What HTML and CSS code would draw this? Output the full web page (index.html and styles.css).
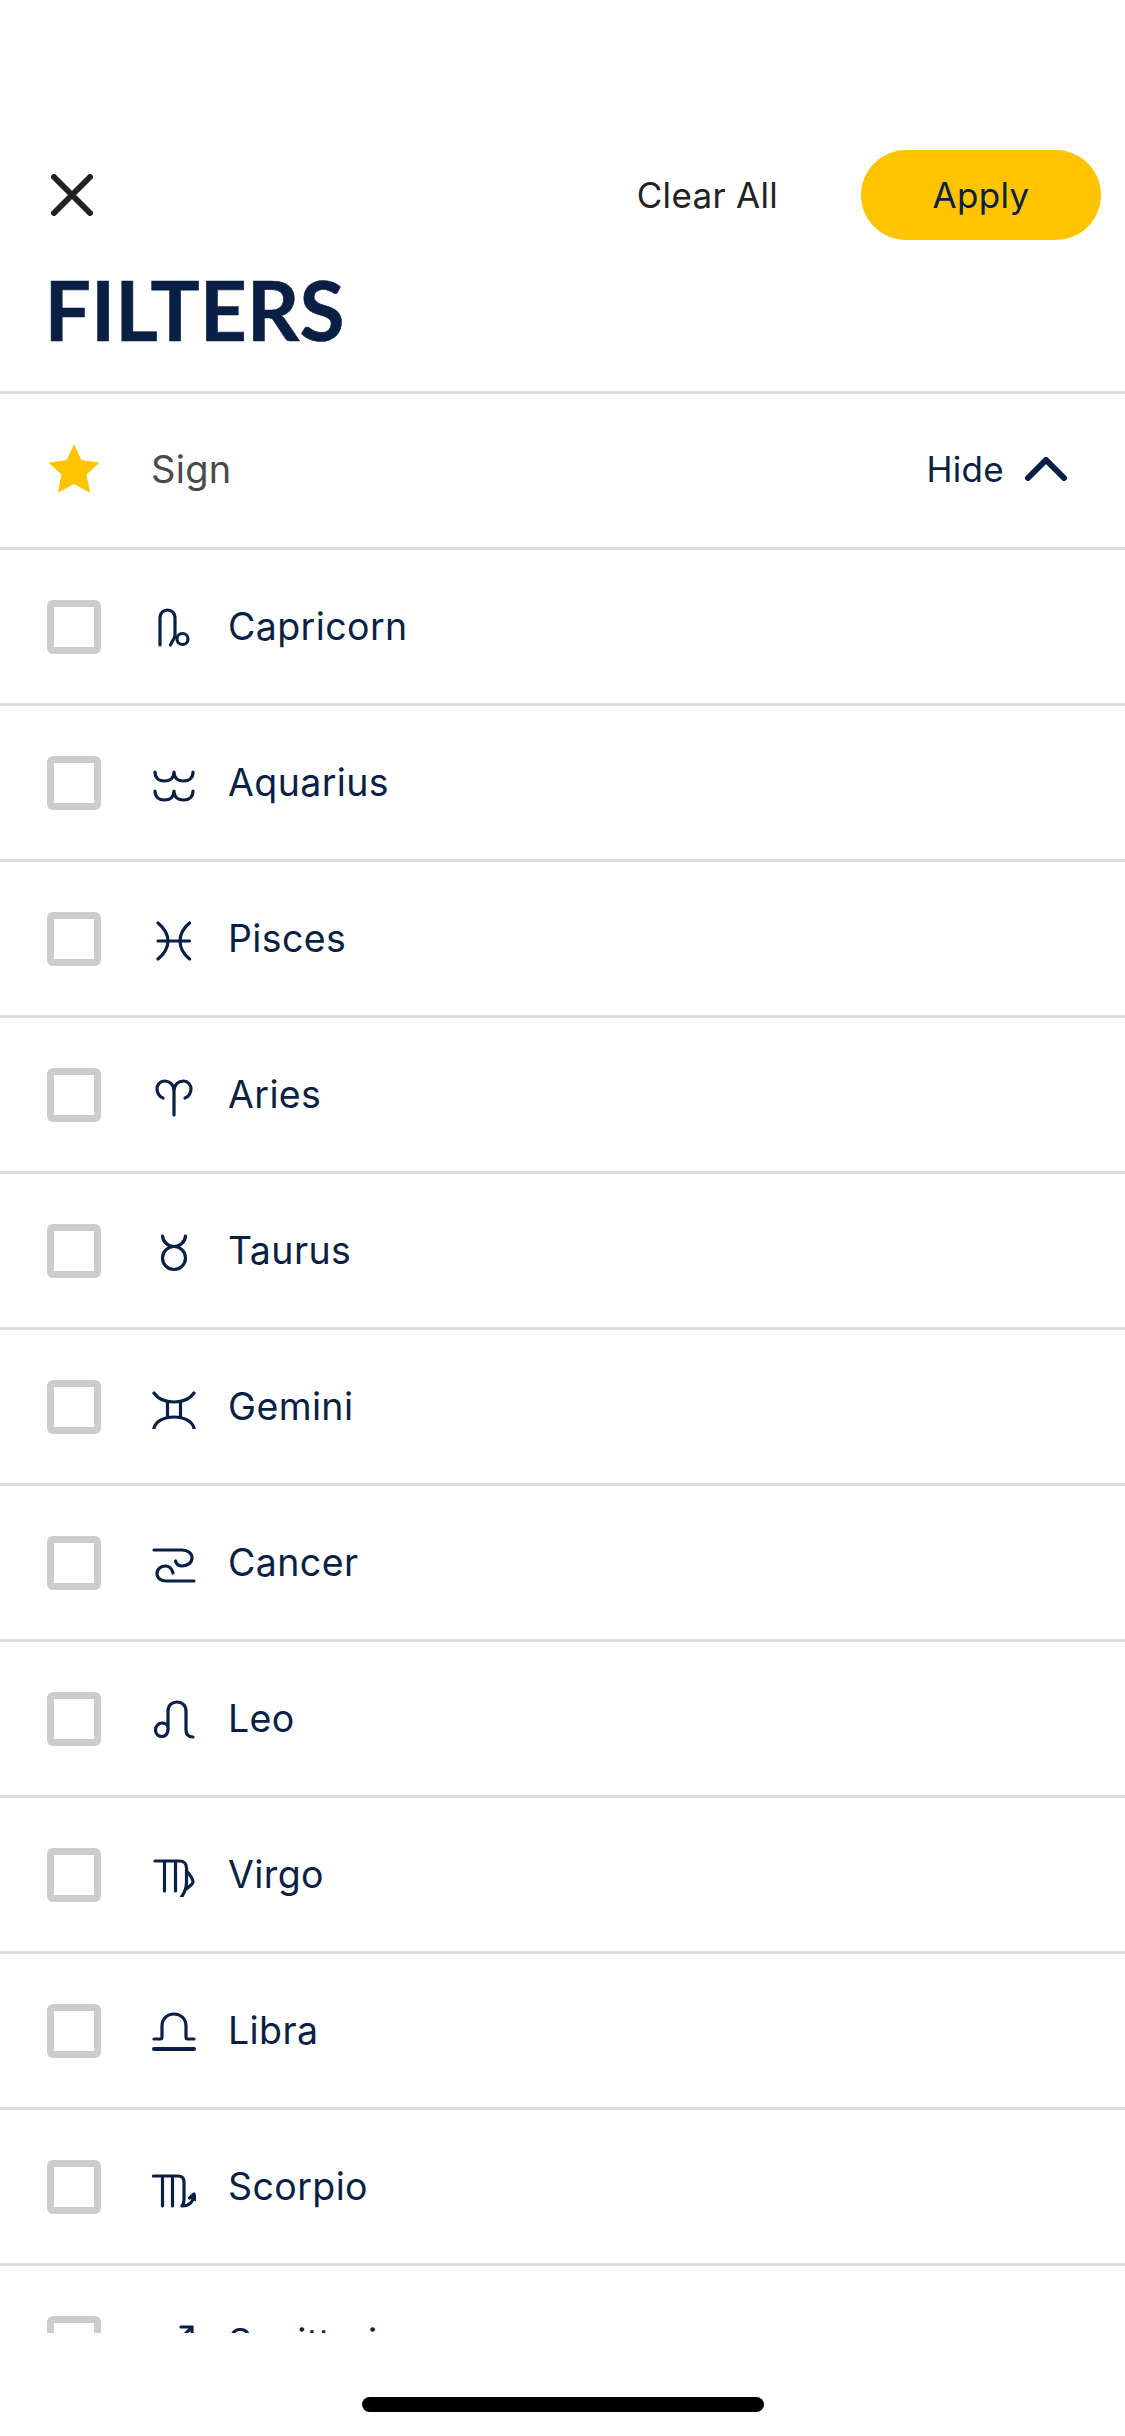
FILE: index.html
```html
<!DOCTYPE html>
<html lang="en">
<head>
<meta charset="utf-8">
<title>Filters</title>
<link rel="stylesheet" href="styles.css">
</head>
<body>
<main class="screen">
  <header class="topbar">
    <button class="close" aria-label="Close">
      <svg class="close-icon" viewBox="0 0 42 42"><path d="M3 3 39 39M39 3 3 39"/></svg>
    </button>
    <span class="clear">Clear All</span>
    <button class="apply">Apply</button>
  </header>
  <h1 class="title">FILTERS</h1>
  <div class="section">
    <div class="row section-head">
      <span class="lead">
        <svg class="star" viewBox="0 0 50 48"><path d="M25 0 32 15.500 49.500 18 37 29.500 40.500 47 25 38.500 9.500 47 13 29.500 .5 18 18 15.500Z"/></svg>
      </span>
      <span class="section-label">Sign</span>
      <span class="toggle">Hide</span>
      <svg class="chevron" viewBox="0 0 42 24"><path d="M3 21 21 3 39 21"/></svg>
    </div>
    <div class="list">
      <label class="row"><span class="check"></span>
        <svg class="sign" viewBox="0 0 44 44"><path d="M8 40V12.500a7.500 7.500 0 0 1 15 0V30c0 4-3 6-4.500 10"/><circle cx="30.500" cy="34" r="5.500"/></svg>
        <span class="name">Capricorn</span></label>
      <label class="row"><span class="check"></span>
        <svg class="sign" viewBox="0 0 44 44"><path d="M3 11c0 6 4 9 9.500 9s9.500-3 9.500-9c0 6 4 9 9.500 9s9.500-3 9.500-9M3 30c0 6 4 9 9.500 9s9.500-3 9.500-9c0 6 4 9 9.500 9s9.500-3 9.500-9"/></svg>
        <span class="name">Aquarius</span></label>
      <label class="row"><span class="check"></span>
        <svg class="sign" viewBox="0 0 44 44"><path d="M6 6c6 5 10 10.500 10 18S12 37 6 42M37.500 6C31.500 11 28 16.500 28 24s3.500 13 9.500 18M6 24h31.500"/></svg>
        <span class="name">Pisces</span></label>
      <label class="row"><span class="check"></span>
        <svg class="sign" viewBox="0 0 44 44"><path d="M22 42V18c0-7-5-10-9.500-10S5 12 5 16s2.500 8 6 9M22 18c0-7 5-10 9.500-10S39 12 39 16s-2.500 8-6 9"/></svg>
        <span class="name">Aries</span></label>
      <label class="row"><span class="check"></span>
        <svg class="sign" viewBox="0 0 44 44"><circle cx="22" cy="29" r="11.500"/><path d="M10.500 7c.5 6 5.500 10.500 11.500 10.500S33 13 33.500 7"/></svg>
        <span class="name">Taurus</span></label>
      <label class="row"><span class="check"></span>
        <svg class="sign" viewBox="0 0 44 44"><path d="M2 8c4 6 11 9 20 9s16-3 20-9M2 43c2-7 10-11 20-11s18 4 20 11M15.500 17v15M28.500 17v15"/></svg>
        <span class="name">Gemini</span></label>
      <label class="row"><span class="check"></span>
        <svg class="sign" viewBox="0 0 44 44"><path d="M2 9h28c6 0 10 3.500 10 8 0 5-5 8-10 8-3 0-5.500-1.500-6.500-5M42 40H14c-5 0-9-3-9-7.500C5 28 9 25 13.500 25c3.500 0 6.500 3 7.500 7"/></svg>
        <span class="name">Cancer</span></label>
      <label class="row"><span class="check"></span>
        <svg class="sign" viewBox="0 0 44 44"><path d="M41 40c-5 0-7-3-7-7V14c0-5.500-4-9-9-9s-9 3.500-9 9v19c0 4-3 6.500-6 6.500-3.500 0-6.500-2.500-6.500-6.500s3-7 6.500-7c2.500 0 5 1.500 6 4"/></svg>
        <span class="name">Leo</span></label>
      <label class="row"><span class="check"></span>
        <svg class="sign" viewBox="0 0 44 44"><path d="M3 8h24c5 0 7.500 2 7.500 7v14c0 6-1.500 10-5 15M12.500 9v29M23.500 9v29M34.500 18c2.500 3 6.500 7 6.500 11 0 2-3 4-7 7"/></svg>
        <span class="name">Virgo</span></label>
      <label class="row"><span class="check"></span>
        <svg class="sign" viewBox="0 0 44 44"><path d="M2 30h6.500c1 0 1.500-.5 1.500-2V17c0-7 5-12 12-12s12 5 12 12v11c0 1.500.5 2 1.500 2H42"/><path class="thick" d="M2 40h40"/></svg>
        <span class="name">Libra</span></label>
      <label class="row"><span class="check"></span>
        <svg class="sign" viewBox="0 0 44 44"><path d="M1.500 11H26c4 0 6 2 6 6v18c0 3-1 5-2 6 6 0 11-3 11.500-10M10.500 12v29M20.500 12v29M37.500 33l4.500-4 1.500 5.500"/></svg>
        <span class="name">Scorpio</span></label>
      <label class="row"><span class="check"></span>
        <svg class="sign" viewBox="0 0 44 44"><path d="M5 42 40 6M29 6h11v11M10 22l13 13"/></svg>
        <span class="name">Sagittarius</span></label>
    </div>
  </div>
  <div class="home-indicator"></div>
</main>
</body>
</html>
```
FILE: styles.css
```css
* { box-sizing: border-box; }
html, body { margin: 0; padding: 0; background: #fff; }
body { font-family: Inter, "Liberation Sans", sans-serif; color: #0a1f44; }
button { border: 0; padding: 0; background: none; font: inherit; color: inherit; }

.screen { width: 1125px; height: 2436px; overflow: hidden; padding-top: 150px; }

.topbar { display: flex; align-items: center; height: 90px; padding: 0 24px 0 51px; }
.close { width: 42px; height: 42px; margin-right: auto; display: block; }
.close-icon { display: block; width: 42px; height: 42px; fill: none; stroke: #222; stroke-width: 6; stroke-linecap: round; }
.clear { font-size: 35px; color: #222; margin-right: 83px; letter-spacing: .3px; }
.apply { width: 240px; height: 90px; border-radius: 45px; background: #ffc400; font-size: 35px; color: #0a1f44; letter-spacing: .3px; }

.title { margin: 20px 0 0; height: 134px; padding-left: 44.500px; font-family: Lato, sans-serif; font-size: 82px; line-height: 98px; font-weight: 700; -webkit-text-stroke: .6px #0a1f44; color: #0a1f44; border-bottom: 3px solid #ddd; }

.row { display: flex; align-items: center; height: 156px; padding: 0 0 0 47px; border-bottom: 3px solid #ddd; }
.section-head { padding-bottom: 3px; }
.list { height: 1783px; overflow: hidden; }

.lead { width: 54px; margin-right: 50px; display: flex; justify-content: center; }
.star { display: block; width: 50px; height: 48px; fill: #ffc400; stroke: #ffc400; stroke-width: 1; stroke-linejoin: round; }
.section-label { font-size: 38px; color: #4a4a4a; margin-right: auto; letter-spacing: .3px; }
.toggle { font-size: 35px; margin-right: 21px; letter-spacing: .3px; }
.chevron { display: block; width: 42px; height: 24px; margin-right: 58px; fill: none; stroke: #0a1f44; stroke-width: 6; stroke-linecap: round; stroke-linejoin: miter; }

.check { flex: none; width: 54px; height: 54px; border: 7px solid #ccc; border-radius: 6px; margin-right: 51px; }
.sign { flex: none; display: block; width: 44px; height: 44px; margin-right: 32px; fill: none; stroke: #0a1f44; stroke-width: 3.200; stroke-linecap: round; stroke-linejoin: round; }
.sign .thick { stroke-width: 4; }
.name { font-size: 37.500px; letter-spacing: .4px; color: #0a1f44; }

.home-indicator { width: 402px; height: 15px; border-radius: 8px; background: #000; margin: 64px auto 0; }
```
